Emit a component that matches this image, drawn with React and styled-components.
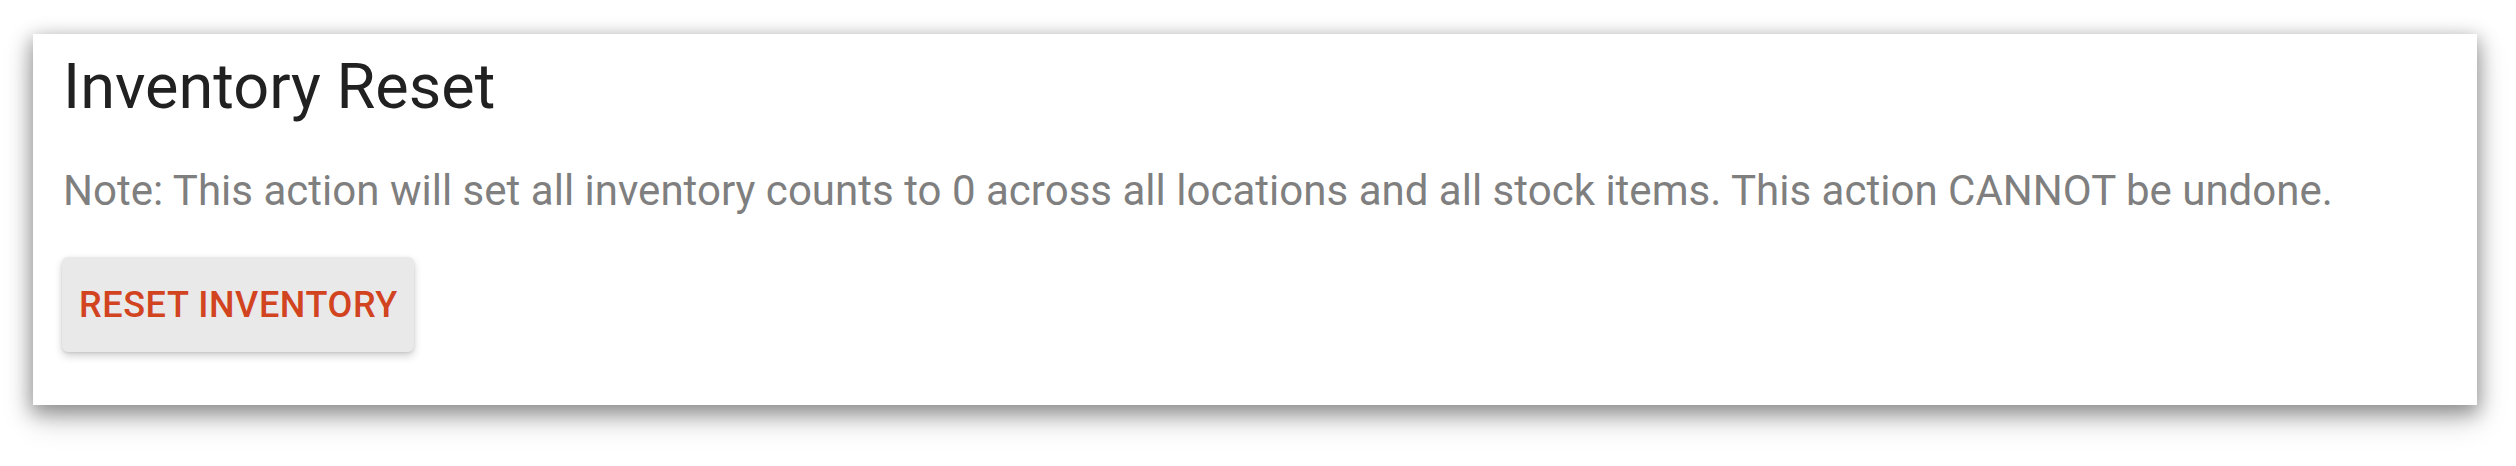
import React from "react";
import styled, { createGlobalStyle } from "styled-components";

const GlobalStyle = createGlobalStyle`
  html, body {
    margin: 0;
    padding: 0;
    background: #ffffff;
  }
  body {
    font-family: Roboto, "Liberation Sans", Arial, sans-serif;
  }
`;

const Page = styled.main`
  box-sizing: border-box;
  min-height: 466px;
  padding: 34px 39px 61px 33px;
`;

const Card = styled.section`
  background: #ffffff;
  padding: 21px 30px 53px 29px;
  box-shadow: 0 6px 18px 2px rgba(0, 0, 0, 0.35), 0 14px 30px rgba(0, 0, 0, 0.18);
  display: flex;
  flex-direction: column;
  align-items: flex-start;
`;

const Title = styled.h2`
  margin: 0 0 0 1px;
  font-family: Roboto, "Liberation Sans", Arial, sans-serif;
  font-weight: 400;
  font-size: 63px;
  line-height: 1;
  color: #212121;
`;

const Note = styled.p`
  margin: 52px 0 0 1px;
  font-size: 42.05px;
  line-height: 1;
  font-weight: 400;
  color: #7f7f7f;
`;

const ActionButton = styled.button`
  margin-top: 45px;
  height: 95px;
  padding: 0 16px 0 17px;
  border: none;
  border-radius: 6px;
  background: #e9e9e9;
  color: ${(p) => p.$tone || "#d2431f"};
  font-family: Roboto, "Liberation Sans", Arial, sans-serif;
  font-weight: 500;
  font-size: 36px;
  letter-spacing: 0.6px;
  text-transform: uppercase;
  box-shadow: 0 4px 8px rgba(0, 0, 0, 0.18), 0 1px 3px rgba(0, 0, 0, 0.1);
  cursor: pointer;
`;

export default function App() {
  return (
    <>
      <GlobalStyle />
      <Page>
        <Card>
          <Title>Inventory Reset</Title>
          <Note>
            Note: This action will set all inventory counts to 0 across all locations and all stock
            items. This action CANNOT be undone.
          </Note>
          <ActionButton $tone="#d2431f">Reset Inventory</ActionButton>
        </Card>
      </Page>
    </>
  );
}
